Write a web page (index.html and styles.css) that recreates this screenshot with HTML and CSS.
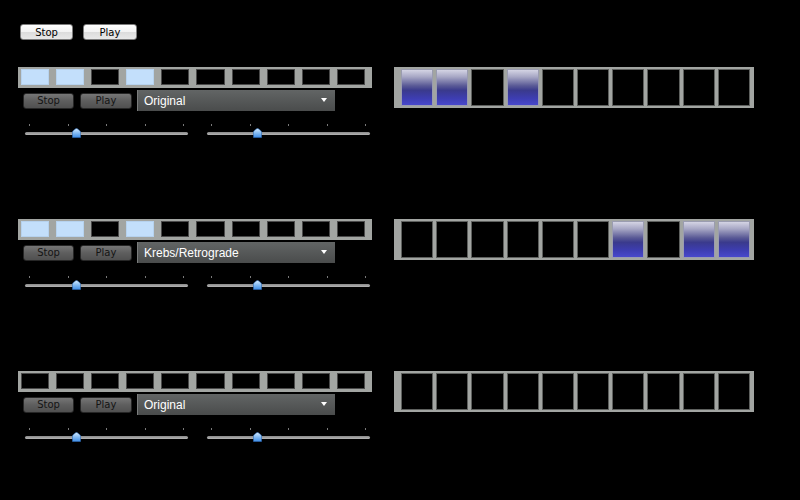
FILE: index.html
```html
<!DOCTYPE html>
<html lang="en">
<head>
    <meta charset="UTF-8">
    <meta name="viewport" content="width=device-width, initial-scale=1.0">
    <title>Sequencer</title>
    <link rel="stylesheet" href="styles.css">
</head>
<body>
    <div class="transport">
        <button class="btn-light">Stop</button>
        <button class="btn-light">Play</button>
    </div>

    <div class="groups">
        <!-- row 1 -->
        <div class="group">
            <div class="panel">
                <div class="strip">
                    <div class="cell on"></div><div class="cell on"></div><div class="cell"></div><div class="cell on"></div><div class="cell"></div>
                    <div class="cell"></div><div class="cell"></div><div class="cell"></div><div class="cell"></div><div class="cell"></div>
                </div>
                <div class="controls">
                    <button class="btn-dark">Stop</button>
                    <button class="btn-dark">Play</button>
                    <div class="select">Original<span class="arrow"></span></div>
                </div>
                <div class="sliders">
                    <div class="slider">
                        <div class="ticks"><span></span><span></span><span></span><span></span><span></span></div>
                        <div class="track"></div>
                        <svg class="thumb" style="left: 47px" width="9" height="10" viewBox="0 0 9 10"><use href="#thumb"/></svg>
                    </div>
                    <div class="slider">
                        <div class="ticks"><span></span><span></span><span></span><span></span><span></span></div>
                        <div class="track"></div>
                        <svg class="thumb" style="left: 46px" width="9" height="10" viewBox="0 0 9 10"><use href="#thumb"/></svg>
                    </div>
                </div>
            </div>
            <div class="big-strip">
                <div class="pad on"></div><div class="pad on"></div><div class="pad"></div><div class="pad on"></div><div class="pad"></div>
                <div class="pad"></div><div class="pad"></div><div class="pad"></div><div class="pad"></div><div class="pad"></div>
            </div>
        </div>

        <!-- row 2 -->
        <div class="group">
            <div class="panel">
                <div class="strip">
                    <div class="cell on"></div><div class="cell on"></div><div class="cell"></div><div class="cell on"></div><div class="cell"></div>
                    <div class="cell"></div><div class="cell"></div><div class="cell"></div><div class="cell"></div><div class="cell"></div>
                </div>
                <div class="controls">
                    <button class="btn-dark">Stop</button>
                    <button class="btn-dark">Play</button>
                    <div class="select">Krebs/Retrograde<span class="arrow"></span></div>
                </div>
                <div class="sliders">
                    <div class="slider">
                        <div class="ticks"><span></span><span></span><span></span><span></span><span></span></div>
                        <div class="track"></div>
                        <svg class="thumb" style="left: 47px" width="9" height="10" viewBox="0 0 9 10"><use href="#thumb"/></svg>
                    </div>
                    <div class="slider">
                        <div class="ticks"><span></span><span></span><span></span><span></span><span></span></div>
                        <div class="track"></div>
                        <svg class="thumb" style="left: 46px" width="9" height="10" viewBox="0 0 9 10"><use href="#thumb"/></svg>
                    </div>
                </div>
            </div>
            <div class="big-strip">
                <div class="pad"></div><div class="pad"></div><div class="pad"></div><div class="pad"></div><div class="pad"></div>
                <div class="pad"></div><div class="pad on"></div><div class="pad"></div><div class="pad on"></div><div class="pad on"></div>
            </div>
        </div>

        <!-- row 3 -->
        <div class="group">
            <div class="panel">
                <div class="strip">
                    <div class="cell"></div><div class="cell"></div><div class="cell"></div><div class="cell"></div><div class="cell"></div>
                    <div class="cell"></div><div class="cell"></div><div class="cell"></div><div class="cell"></div><div class="cell"></div>
                </div>
                <div class="controls">
                    <button class="btn-dark">Stop</button>
                    <button class="btn-dark">Play</button>
                    <div class="select">Original<span class="arrow"></span></div>
                </div>
                <div class="sliders">
                    <div class="slider">
                        <div class="ticks"><span></span><span></span><span></span><span></span><span></span></div>
                        <div class="track"></div>
                        <svg class="thumb" style="left: 47px" width="9" height="10" viewBox="0 0 9 10"><use href="#thumb"/></svg>
                    </div>
                    <div class="slider">
                        <div class="ticks"><span></span><span></span><span></span><span></span><span></span></div>
                        <div class="track"></div>
                        <svg class="thumb" style="left: 46px" width="9" height="10" viewBox="0 0 9 10"><use href="#thumb"/></svg>
                    </div>
                </div>
            </div>
            <div class="big-strip">
                <div class="pad"></div><div class="pad"></div><div class="pad"></div><div class="pad"></div><div class="pad"></div>
                <div class="pad"></div><div class="pad"></div><div class="pad"></div><div class="pad"></div><div class="pad"></div>
            </div>
        </div>
    </div>

    <svg class="defs" width="0" height="0">
        <defs>
            <linearGradient id="thumb-fill" x1="0" y1="0" x2="0" y2="1">
                <stop offset="0" stop-color="#d8ecff"/>
                <stop offset="0.45" stop-color="#8cc0f4"/>
                <stop offset="1" stop-color="#3f8de6"/>
            </linearGradient>
            <path id="thumb" d="M0.5 9.5 V4.2 Q0.5 3.2 1.5 2.4 L3.6 0.8 Q4.5 0.2 5.4 0.8 L7.5 2.4 Q8.5 3.2 8.5 4.2 V9.5 Z" fill="url(#thumb-fill)" stroke="#2d6cb8" stroke-width="0.6"/>
        </defs>
    </svg>
</body>
</html>
```

FILE: styles.css
```css
body {
    margin: 0;
    background: #000;
    font-family: "Liberation Sans", Arial, sans-serif;
}
.defs {
    position: absolute;
}
.transport {
    display: flex;
    gap: 10px;
    padding: 24px 0 0 20px;
}
.btn-light {
    width: 53px;
    height: 16px;
    padding: 0;
    font-family: "DejaVu Sans", sans-serif;
    font-size: 10px;
    color: #000;
    border: 1px solid #7c7c7c;
    border-radius: 3px;
    background: linear-gradient(#ffffff, #f2f2f2 50%, #dcdcdc 51%, #e8e8e8);
}
.btn-light + .btn-light {
    width: 54px;
}
.groups {
    margin-top: 27px;
}
.group {
    display: flex;
    gap: 22px;
    height: 152px;
    padding-left: 18px;
}
.panel {
    width: 354px;
}
.strip {
    display: flex;
    gap: 7px;
    height: 21px;
    padding: 2px 7px 3px 3px;
    box-sizing: border-box;
    background: #a2a5a2;
}
.cell {
    flex: 1;
    background: #000;
    border: 1px solid #4a4a4a;
}
.cell.on {
    background: #c3dffb;
    border-color: #b6d2ee;
}
.controls {
    display: flex;
    align-items: center;
    height: 21px;
    margin-top: 2px;
    padding-left: 5px;
}
.btn-dark {
    width: 51px;
    height: 16px;
    padding: 0;
    margin-right: 6px;
    font-family: "DejaVu Sans", sans-serif;
    font-size: 10px;
    color: #141414;
    border: 1px solid #262626;
    border-radius: 3px;
    background: linear-gradient(#767676, #5e5e5e 50%, #505050);
}
.btn-dark + .btn-dark {
    width: 52px;
    margin-right: 5px;
}
.select {
    position: relative;
    width: 198px;
    height: 21px;
    box-sizing: border-box;
    padding: 4px 0 0 6px;
    font-size: 12px;
    color: #fff;
    background: linear-gradient(#626565, #4a4c4c);
    border-left: 1px solid #7a7c7c;
}
.arrow {
    position: absolute;
    right: 8px;
    top: 8px;
    border-left: 3.5px solid transparent;
    border-right: 3.5px solid transparent;
    border-top: 4px solid #fff;
}
.sliders {
    display: flex;
    gap: 19px;
    margin-top: 11px;
    padding-left: 7px;
}
.slider {
    position: relative;
    width: 163px;
    height: 16px;
}
.ticks {
    display: flex;
    justify-content: space-between;
    margin-top: 2px;
    padding: 0 4px;
}
.ticks span {
    width: 1px;
    height: 2px;
    background: #7a7a7a;
}
.track {
    height: 3px;
    margin-top: 6px;
    border-radius: 2px;
    background: linear-gradient(#8a8a8a, #b4b4b4);
}
.thumb {
    position: absolute;
    top: 6px;
}
.big-strip {
    display: flex;
    gap: 3px;
    width: 360px;
    height: 41px;
    padding: 2px 4px 2px 7px;
    box-sizing: border-box;
    background: #a2a5a2;
}
.pad {
    flex: 1;
    background: #000;
    border: 1px solid #5e605e;
}
.pad.on {
    border-color: #9a9cb0;
    background: linear-gradient(#d4d4e4 0%, #a6a6c4 20%, #5a5a96 45%, #3a3a8c 58%, #3d3db0 80%, #4848cc 100%);
}
```
